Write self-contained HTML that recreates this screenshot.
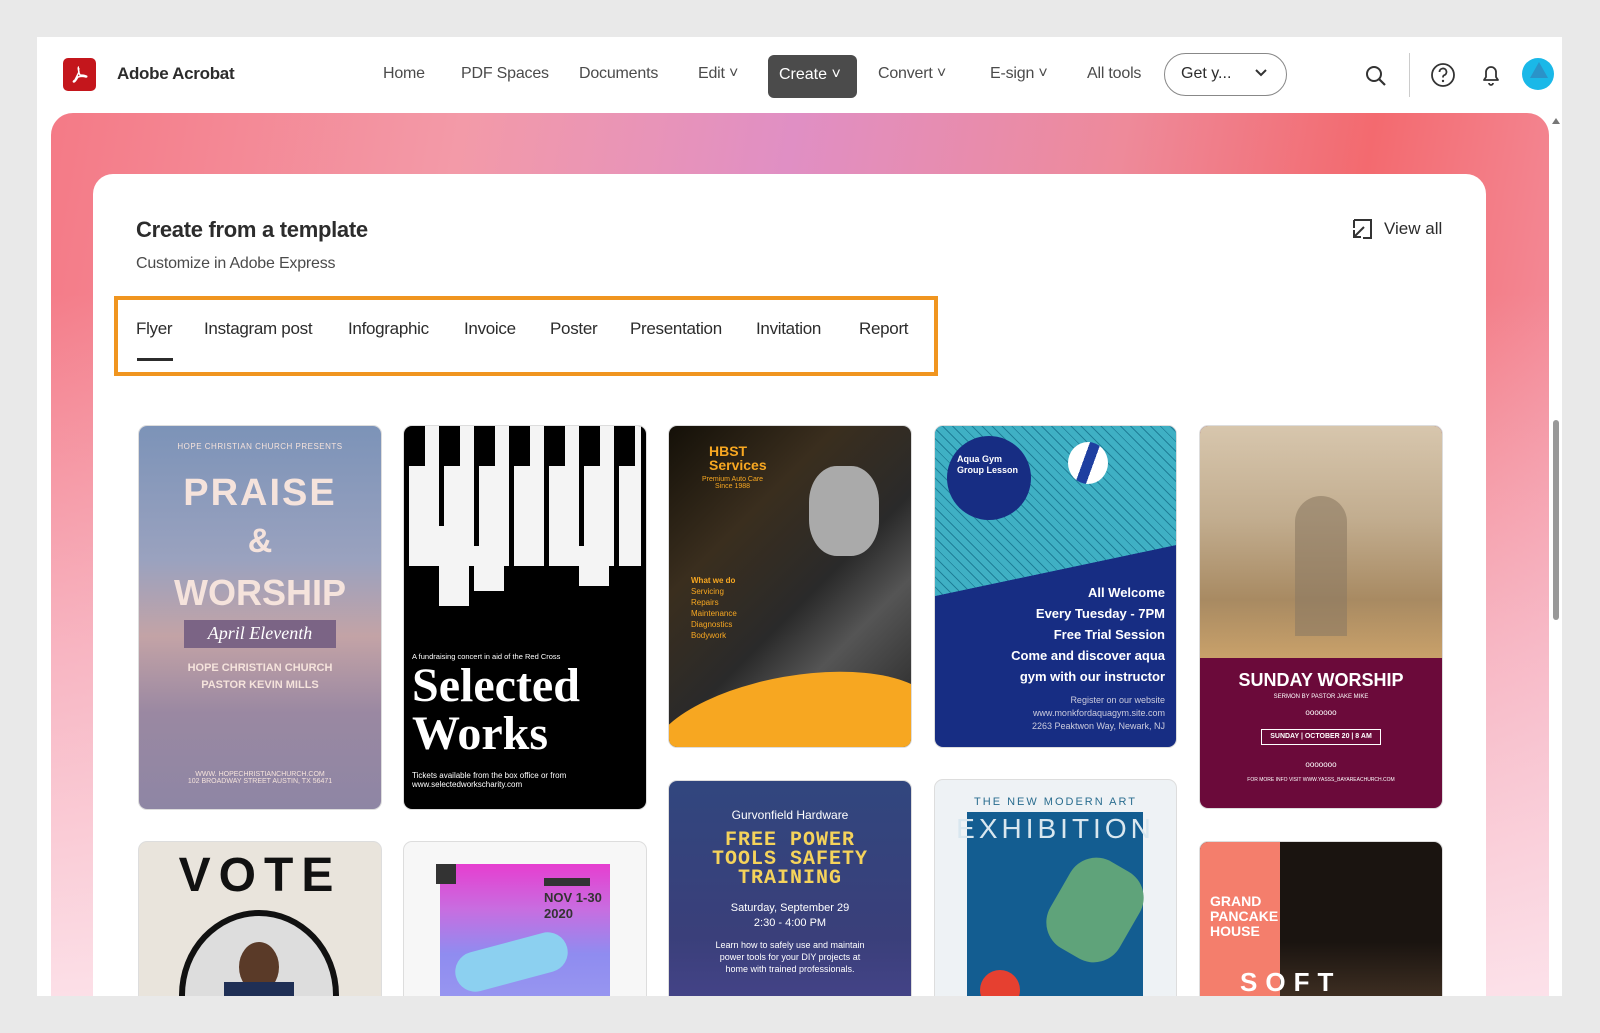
<!DOCTYPE html>
<html><head><meta charset="utf-8"><style>
*{box-sizing:border-box;margin:0;padding:0}
html,body{width:1600px;height:1033px;overflow:hidden}
body{background:#e9e9e9;font-family:"Liberation Sans",sans-serif;position:relative;color:#2c2c2c}
#wrap{position:absolute;left:0;top:0;width:1600px;height:996px;overflow:hidden}
.frame{position:absolute;left:37px;top:37px;width:1525px;height:959px;background:#fff;overflow:hidden}
.abs{position:absolute}
.nav{font-size:16px;color:#4b4b4b;top:65px;white-space:nowrap;letter-spacing:-0.2px}
.grad{position:absolute;left:51px;top:113px;width:1498px;height:900px;border-radius:22px 22px 0 0;background:linear-gradient(100deg,#f47a86 0%,#f39aa8 25%,#e08fc4 45%,#ee8a9a 65%,#f36a6f 80%,#f39aab 100%)}
.gradfade{position:absolute;left:51px;top:113px;width:1498px;height:900px;border-radius:22px 22px 0 0;background:linear-gradient(180deg,rgba(255,255,255,0) 0%,rgba(255,255,255,0) 20%,rgba(250,215,228,.6) 60%,rgba(253,235,242,.9) 100%)}
.card{position:absolute;left:93px;top:174px;width:1393px;height:900px;background:#fff;border-radius:20px}
.tab{position:absolute;top:319px;font-size:17px;color:#2c2c2c;white-space:nowrap;letter-spacing:-0.3px}
.t{position:absolute;border-radius:8px;overflow:hidden;box-shadow:0 0 0 1px #ddd}
.c{position:absolute;left:0;width:100%;text-align:center}
</style></head><body>
<div id="wrap">
<div class="frame"></div>
<div class="abs" style="left:63px;top:58px;width:33px;height:33px;background:#c4161c;border-radius:5px"></div>
<svg class="abs" style="left:68px;top:63px" width="23" height="23" viewBox="0 0 23 23"><path d="M11 4c-1 0-1 2 0 5l-4 8c-2 1-2 2-1 2 1 0 2-2 4-5 3-1 5-1 8 0 1 0 1-1 0-1-2-1-4-1-6-1-1-2-2-4-1-7" fill="none" stroke="#fff" stroke-width="1.5"/></svg>
<div class="abs" style="left:117px;top:64px;font-size:17px;font-weight:bold;color:#2c2c2c;letter-spacing:-0.3px">Adobe Acrobat</div>
<div class="abs nav" style="left:383px">Home</div>
<div class="abs nav" style="left:461px">PDF Spaces</div>
<div class="abs nav" style="left:579px">Documents</div>
<div class="abs nav" style="left:698px">Edit ˅</div>
<div class="abs" style="left:768px;top:55px;width:89px;height:43px;background:#4b4b4b;border-radius:6px;color:#fff;font-size:16px;padding:11px 0 0 11px">Create ˅</div>
<div class="abs nav" style="left:878px">Convert ˅</div>
<div class="abs nav" style="left:990px">E-sign ˅</div>
<div class="abs nav" style="left:1087px">All tools</div>
<div class="abs" style="left:1164px;top:53px;width:123px;height:43px;border:1px solid #888;border-radius:22px;font-size:16px;color:#2c2c2c;padding:11px 0 0 16px">Get y...</div>
<svg class="abs" style="left:1254px;top:68px" width="14" height="10"><path d="M2 2l5 5 5-5" fill="none" stroke="#333" stroke-width="2"/></svg>
<svg class="abs" style="left:1364px;top:64px" width="24" height="24"><circle cx="10" cy="10" r="7" fill="none" stroke="#333" stroke-width="2"/><path d="M15 15l6 6" stroke="#333" stroke-width="2.2"/></svg>
<div class="abs" style="left:1409px;top:53px;width:1px;height:44px;background:#ccc"></div>
<svg class="abs" style="left:1430px;top:62px" width="26" height="26"><circle cx="13" cy="13" r="11" fill="none" stroke="#333" stroke-width="1.8"/><path d="M9.5 10a3.5 3.5 0 1 1 4.5 3.3c-1 .4-1 1-1 2.2" fill="none" stroke="#333" stroke-width="1.8"/><circle cx="13" cy="19" r="1.2" fill="#333"/></svg>
<svg class="abs" style="left:1479px;top:62px" width="24" height="26"><path d="M5 18h14l-2-3v-5a5 5 0 0 0-10 0v5z" fill="none" stroke="#333" stroke-width="1.8" stroke-linejoin="round"/><path d="M10 21a2 2 0 0 0 4 0" fill="none" stroke="#333" stroke-width="1.8"/></svg>
<div class="abs" style="left:1522px;top:58px;width:32px;height:32px;border-radius:50%;background:#1ab8e8"></div>
<div class="abs" style="left:1530px;top:62px;width:0;height:0;border-left:9px solid transparent;border-right:9px solid transparent;border-bottom:16px solid #2a93c9"></div>

<div class="grad"></div><div class="gradfade"></div>
<div class="card"></div>
<div class="abs" style="left:1552px;top:118px;width:0;height:0;border-left:4px solid transparent;border-right:4px solid transparent;border-bottom:6px solid #777"></div>
<div class="abs" style="left:1553px;top:420px;width:6px;height:200px;background:#999;border-radius:3px"></div>

<div class="abs" style="left:136px;top:217px;font-size:22px;font-weight:bold;color:#2c2c2c;letter-spacing:-0.3px">Create from a template</div>
<div class="abs" style="left:136px;top:255px;font-size:16px;color:#4b4b4b;letter-spacing:-0.2px">Customize in Adobe Express</div>
<svg class="abs" style="left:1350px;top:217px" width="24" height="24"><path d="M4 3h17v18h-8M4 3v8" fill="none" stroke="#333" stroke-width="2"/><path d="M14 10l-10 10M4 13v7h7" fill="none" stroke="#333" stroke-width="2"/></svg>
<div class="abs" style="left:1384px;top:219px;font-size:17px;color:#2c2c2c">View all</div>

<div class="abs" style="left:114px;top:296px;width:824px;height:80px;border:4px solid #f0951f"></div>
<div class="tab" style="left:136px">Flyer</div>
<div class="tab" style="left:204px">Instagram post</div>
<div class="tab" style="left:348px">Infographic</div>
<div class="tab" style="left:464px">Invoice</div>
<div class="tab" style="left:550px">Poster</div>
<div class="tab" style="left:630px">Presentation</div>
<div class="tab" style="left:756px">Invitation</div>
<div class="tab" style="left:859px">Report</div>
<div class="abs" style="left:137px;top:358px;width:36px;height:3px;background:#2c2c2c"></div>

<div class="t" style="left:139px;top:426px;width:242px;height:383px;background:linear-gradient(180deg,#7c93b8 0%,#9aa2bf 35%,#c3a3a6 55%,#9a88a2 75%,#8e86a4 100%);color:#f5e3dc">
<div class="c" style="top:16px;font-size:8px;letter-spacing:.5px">HOPE CHRISTIAN CHURCH PRESENTS</div>
<div class="c" style="top:46px;font-size:38px;letter-spacing:2px;font-weight:bold">PRAISE</div>
<div class="c" style="top:96px;font-size:34px;font-weight:bold">&amp;</div>
<div class="c" style="top:146px;font-size:36px;font-weight:bold">WORSHIP</div>
<div class="abs" style="left:45px;top:194px;width:152px;height:28px;background:#7b6485;color:#fff;font-style:italic;font-size:18px;text-align:center;padding-top:3px;font-family:'Liberation Serif',serif">April Eleventh</div>
<div class="c" style="top:236px;font-size:11px;font-weight:bold">HOPE CHRISTIAN CHURCH</div>
<div class="c" style="top:253px;font-size:11px;font-weight:bold">PASTOR KEVIN MILLS</div>
<div class="c" style="top:345px;font-size:7px">WWW. HOPECHRISTIANCHURCH.COM<br>102 BROADWAY STREET AUSTIN, TX 56471</div>
</div>
<div class="t" style="left:404px;top:426px;width:242px;height:383px;background:#000;color:#fff">
<div class="abs" style="left:5px;top:0;width:232px;height:140px;background:repeating-linear-gradient(90deg,#f4f4f4 0 30px,#000 30px 35px)"></div>
<div class="abs" style="left:35px;top:100px;width:30px;height:80px;background:#f4f4f4"></div>
<div class="abs" style="left:70px;top:120px;width:30px;height:45px;background:#f4f4f4"></div>
<div class="abs" style="left:175px;top:120px;width:30px;height:40px;background:#f4f4f4"></div>
<div class="abs" style="left:5px;top:0;width:232px;height:40px;background:repeating-linear-gradient(90deg,#000 0 16px,transparent 16px 35px)"></div>
<div class="abs" style="left:8px;top:226px;font-size:7.5px">A fundraising concert in aid of the Red Cross</div>
<div class="abs" style="left:8px;top:236px;font-size:48px;line-height:48px;font-weight:bold;font-family:'Liberation Serif',serif">Selected<br>Works</div>
<div class="abs" style="left:8px;top:345px;font-size:8px">Tickets available from the box office or from<br>www.selectedworkscharity.com</div>
</div>
<div class="t" style="left:669px;top:426px;width:242px;height:321px;background:linear-gradient(135deg,#141008 0%,#3a2e1e 30%,#2a2a2a 55%,#555 70%,#222 100%)">
<div class="abs" style="left:140px;top:40px;width:70px;height:90px;border-radius:40%;background:#aaa"></div>
<div class="abs" style="left:-20px;top:250px;width:290px;height:120px;border-radius:50% 50% 0 0;background:#f7a721;transform:rotate(-10deg)"></div>
<div class="abs" style="left:40px;top:18px;font-size:14px;font-weight:bold;color:#f7a721;line-height:14px">HBST<br>Services</div>
<div class="abs" style="left:33px;top:50px;font-size:7px;color:#f7a721;text-align:center">Premium Auto Care<br>Since 1988</div>
<div class="abs" style="left:22px;top:149px;font-size:8px;color:#f7a721;line-height:11px"><b>What we do</b><br>Servicing<br>Repairs<br>Maintenance<br>Diagnostics<br>Bodywork</div>
</div>
<div class="t" style="left:935px;top:426px;width:241px;height:321px;background:#172d83;color:#fff">
<div class="abs" style="left:0;top:0;width:241px;height:170px;background:repeating-linear-gradient(45deg,#3fb0c4 0 6px,#1f7f98 6px 7px),#3fb0c4;clip-path:polygon(0 0,100% 0,100% 70%,0 100%)"></div>
<div class="abs" style="left:12px;top:10px;width:84px;height:84px;border-radius:50%;background:#172d83;font-size:9px;font-weight:bold;padding:18px 0 0 10px;line-height:11px">Aqua Gym<br>Group Lesson</div>
<div class="abs" style="left:133px;top:16px;width:40px;height:42px;border-radius:50%;background:linear-gradient(110deg,#fff 40%,#1e3fa0 40% 60%,#fff 60%)"></div>
<div class="abs" style="right:11px;top:156px;text-align:right;font-size:13px;font-weight:bold;line-height:21px">All Welcome<br>Every Tuesday - 7PM<br>Free Trial Session<br>Come and discover aqua<br>gym with our instructor</div>
<div class="abs" style="right:11px;top:268px;text-align:right;font-size:9px;line-height:13px;color:#ccd">Register on our website<br>www.monkfordaquagym.site.com<br>2263 Peaktwon Way, Newark, NJ</div>
</div>
<div class="t" style="left:1200px;top:426px;width:242px;height:382px;background:#6b0a3a;color:#fff">
<div class="abs" style="left:0;top:0;width:242px;height:232px;background:linear-gradient(180deg,#d7c6ad 0%,#c2ad8f 40%,#a88a62 75%,#c9a16a 100%)"></div>
<div class="abs" style="left:95px;top:70px;width:52px;height:140px;background:#8c7a62;border-radius:26px 26px 0 0;opacity:.6"></div>
<div class="c" style="top:244px;font-size:18px;font-weight:bold">SUNDAY WORSHIP</div>
<div class="c" style="top:268px;font-size:6px">SERMON BY PASTOR JAKE MIKE</div>
<div class="c" style="top:282px;font-size:8px">ooooooo</div>
<div class="abs" style="left:61px;top:303px;width:120px;height:16px;border:1px solid #fff;font-size:7px;font-weight:bold;text-align:center;padding-top:3px">SUNDAY | OCTOBER 20 | 8 AM</div>
<div class="c" style="top:334px;font-size:8px">ooooooo</div>
<div class="c" style="top:351px;font-size:5px">FOR MORE INFO VISIT WWW.YASSS_BAYAREACHURCH.COM</div>
</div>
<div class="t" style="left:139px;top:842px;width:242px;height:200px;background:#e9e4dc">
<div class="c" style="top:6px;font-size:48px;font-weight:bold;letter-spacing:8px;color:#111">VOTE</div>
<div class="abs" style="left:40px;top:68px;width:160px;height:170px;border-radius:50%;border:6px solid #111;background:#ddd"></div>
<div class="abs" style="left:100px;top:100px;width:40px;height:50px;border-radius:50%;background:#5a3a28"></div>
<div class="abs" style="left:85px;top:140px;width:70px;height:40px;background:#1f2f55"></div>
</div>
<div class="t" style="left:404px;top:842px;width:242px;height:200px;background:#f7f7f7">
<div class="abs" style="left:36px;top:22px;width:170px;height:150px;background:linear-gradient(180deg,#e63ed0 0%,#c86de0 30%,#8f8cf0 60%,#9a99f0 100%)"></div>
<div class="abs" style="left:32px;top:22px;width:20px;height:20px;background:#333"></div>
<div class="abs" style="left:140px;top:36px;width:46px;height:8px;background:#333"></div>
<div class="abs" style="left:140px;top:48px;font-size:13px;font-weight:bold;color:#333;line-height:16px">NOV 1-30<br>2020</div>
<div class="abs" style="left:50px;top:100px;width:115px;height:40px;background:#8cd0f0;border-radius:20px;transform:rotate(-15deg)"></div>
</div>
<div class="t" style="left:669px;top:781px;width:242px;height:260px;background:linear-gradient(180deg,#31467e,#3a3f7a 60%,#4a4690);color:#fff">
<div class="c" style="top:27px;font-size:12px">Gurvonfield Hardware</div>
<div class="c" style="top:50px;font-size:20px;font-weight:bold;color:#f5d35b;line-height:19px;letter-spacing:1px;font-family:'Liberation Mono',monospace">FREE POWER<br>TOOLS SAFETY<br>TRAINING</div>
<div class="c" style="top:120px;font-size:11px;line-height:15px">Saturday, September 29<br>2:30 - 4:00 PM</div>
<div class="c" style="top:158px;font-size:9px;line-height:12px">Learn how to safely use and maintain<br>power tools for your DIY projects at<br>home with trained professionals.</div>
</div>
<div class="t" style="left:935px;top:780px;width:241px;height:260px;background:#eef2f5">
<div class="c" style="top:16px;font-size:11px;letter-spacing:2px;color:#2a6d8f">THE NEW MODERN ART</div>
<div class="abs" style="left:32px;top:32px;width:176px;height:230px;background:#135d91"></div>
<div class="c" style="top:33px;font-size:28px;letter-spacing:4px;color:#d9e7ef">EXHIBITION</div>
<div class="abs" style="left:120px;top:80px;width:80px;height:100px;background:#5fa37a;border-radius:30px;transform:rotate(30deg)"></div>
<div class="abs" style="left:45px;top:190px;width:40px;height:40px;border-radius:50%;background:#e64030"></div>
</div>
<div class="t" style="left:1200px;top:842px;width:242px;height:200px;background:#1a1410">
<div class="abs" style="left:0;top:0;width:80px;height:200px;background:#f47e6c"></div>
<div class="abs" style="left:10px;top:52px;font-size:14px;font-weight:bold;color:#fff;line-height:15px">GRAND<br>PANCAKE<br>HOUSE</div>
<div class="abs" style="left:80px;top:100px;width:162px;height:100px;background:linear-gradient(180deg,#1a1410,#5a4330)"></div>
<div class="abs" style="left:40px;top:125px;font-size:26px;font-weight:bold;color:#fff;letter-spacing:8px">SOFT</div>
</div>
</div>
</body></html>
